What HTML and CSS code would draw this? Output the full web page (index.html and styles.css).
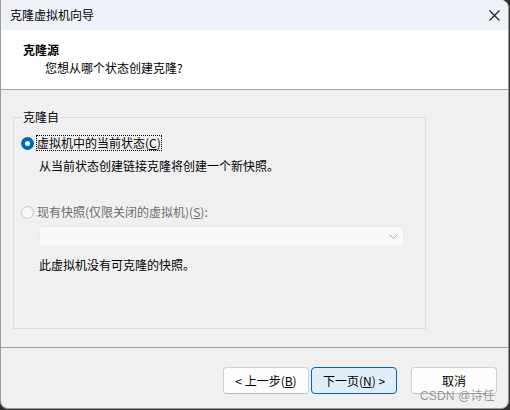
FILE: index.html
```html
<!DOCTYPE html>
<html lang="zh-CN">
<head>
<meta charset="utf-8">
<title>克隆虚拟机向导</title>
<link rel="stylesheet" href="styles.css">
</head>
<body>
<div class="window">
  <div class="titlebar">
    <span class="title">克隆虚拟机向导</span>
    <svg class="close" width="11" height="11" viewBox="0 0 11 11"><path d="M0.5 0.5 L10.5 10.5 M10.5 0.5 L0.5 10.5" stroke="#1b1b1b" stroke-width="1.1" fill="none"/></svg>
  </div>
  <div class="header">
    <div class="h-title">克隆源</div>
    <div class="h-sub">您想从哪个状态创建克隆?</div>
  </div>
  <div class="main">
    <fieldset class="group">
      <legend class="legend">克隆自</legend>
      <div class="row first">
        <span class="radio checked"></span>
        <span class="label focus">虚拟机中的当前状态(<u>C</u>)</span>
      </div>
      <div class="desc">从当前状态创建链接克隆将创建一个新快照。</div>
      <div class="row second">
        <span class="radio disabled"></span>
        <span class="label dim">现有快照(仅限关闭的虚拟机)(<u>S</u>):</span>
      </div>
      <div class="combo">
        <svg class="chev" width="9" height="5" viewBox="0 0 9 5"><path d="M0.5 0.5 L4.5 4.5 L8.5 0.5" stroke="#a8a8a8" stroke-width="1" fill="none"/></svg>
      </div>
      <div class="note">此虚拟机没有可克隆的快照。</div>
    </fieldset>
  </div>
  <div class="footer">
    <button class="btn">&lt; 上一步(<u>B</u>)</button>
    <button class="btn primary">下一页(<u>N</u>) &gt;</button>
    <button class="btn cancel">取消</button>
    <span class="watermark">CSDN @诗任</span>
  </div>
</div>
</body>
</html>
```
FILE: styles.css
```css
* { box-sizing: border-box; }
html, body { margin: 0; padding: 0; }
body {
  width: 510px;
  height: 410px;
  background: #303030;
  font-family: "Noto Sans CJK SC", "Microsoft YaHei", sans-serif;
  font-size: 12px;
  line-height: 16px;
  color: #000;
  overflow: hidden;
}
.window {
  width: 509px;
  height: 409px;
  background: #f0f0f0;
  border: 1px solid #9a9a9a;
  border-top: none;
  border-radius: 0 8px 8px 8px;
  overflow: hidden;
  display: flex;
  flex-direction: column;
  position: relative;
}
.titlebar {
  height: 30px;
  background: #eef2f8;
  display: flex;
  align-items: center;
  justify-content: space-between;
  padding: 0 8px 0 9px;
  flex: none;
}
.title { font-size: 12px; }
.close { display: block; }
.header {
  height: 60px;
  background: #fff;
  border-bottom: 1px solid #a0a0a0;
  padding: 12px 0 0 22px;
  flex: none;
}
.h-title { font-weight: bold; }
.h-sub { margin-top: 2px; padding-left: 22px; }
.main {
  height: 257px;
  flex: none;
  padding: 19px 0 0 12px;
}
.group {
  margin: 0;
  width: 413px;
  height: 220px;
  border: 1px solid #dcdcdc;
  padding: 0 0 0 7px;
  display: flex;
  flex-direction: column;
  align-items: flex-start;
}
.legend {
  padding: 0 1px;
  margin-left: 1px;
  line-height: 16px;
}
.row {
  display: flex;
  align-items: center;
  height: 16px;
}
.row.first { margin-top: 10px; }
.row.second { margin-top: 30px; }
.radio {
  width: 13px;
  height: 13px;
  border-radius: 50%;
  flex: none;
  margin-right: 2px;
}
.radio.checked {
  background: #0067c0;
  position: relative;
}
.radio.checked::after {
  content: "";
  display: block;
  width: 5px;
  height: 5px;
  margin: 4px;
  border-radius: 50%;
  background: #fff;
}
.radio.disabled {
  border: 1px solid #c6c6c6;
  background: #f7f7f7;
}
.label { padding: 0 1px; }
.label u { text-decoration: underline; }
.focus { outline: 1px dotted #000; outline-offset: -1px; padding: 0 1px; }
.dim { color: #6d6d6d; }
.desc { margin-top: 7px; margin-left: 18px; }
.combo {
  margin-top: 6px;
  margin-left: 18px;
  width: 365px;
  height: 21px;
  background: #f9f9f9;
  border: 1px solid #ebebeb;
  border-radius: 3px;
  display: flex;
  align-items: center;
  justify-content: flex-end;
  padding-right: 5px;
}
.chev { display: block; }
.note { margin-top: 10px; margin-left: 18px; }
.footer {
  flex: 1;
  border-top: 1px solid #a0a0a0;
  display: flex;
  justify-content: flex-end;
  align-items: flex-start;
  padding: 19px 11px 0 0;
  position: relative;
}
.btn {
  font-family: inherit;
  font-size: 12px;
  line-height: 16px;
  width: 86px;
  height: 27px;
  margin: 0 0 0 2px;
  padding: 0;
  background: #fdfdfd;
  border: 1px solid #d0d0d0;
  border-bottom-color: #bdbdbd;
  border-radius: 4px;
  color: #000;
}
.btn.primary {
  background: #e0eef9;
  border: 1px solid #0067c0;
}
.btn.cancel { margin-left: 14px; }
.watermark {
  position: absolute;
  right: 13px;
  bottom: 5px;
  font-family: "Liberation Sans", "Noto Sans CJK SC", sans-serif;
  font-size: 12px;
  line-height: 14px;
  letter-spacing: 0.2px;
  color: rgba(120, 120, 120, 0.75);
}
```
